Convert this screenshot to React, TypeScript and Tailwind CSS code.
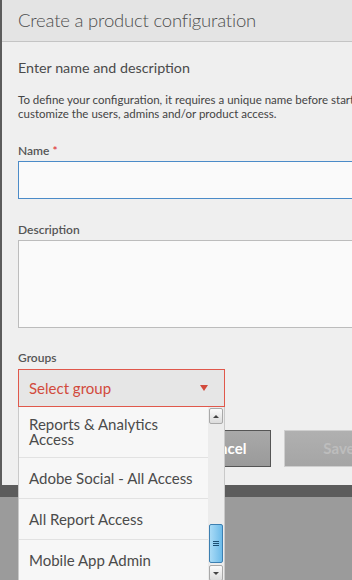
import React from "react";

const groups = [
  "Reports & Analytics Access",
  "Adobe Social - All Access",
  "All Report Access",
  "Mobile App Admin",
];

function Scrollbar() {
  return (
    <div className="flex w-[16px] shrink-0 flex-col items-center bg-[#ececec] py-[1px]">
      <div className="flex h-[16px] w-[14px] items-center justify-center rounded-[2px] border border-[#a9a9a9] bg-gradient-to-b from-[#fbfbfb] to-[#dcdcdc]">
        <div className="h-0 w-0 border-x-[3px] border-b-[3px] border-x-transparent border-b-[#444]" />
      </div>
      <div className="flex-1" />
      <div className="flex h-[39px] w-[14px] items-center justify-center rounded-[2px] border border-[#3c7fb1] bg-gradient-to-r from-[#a9dbf6] to-[#6cbbe9]">
        <div className="flex flex-col gap-[1px]">
          <div className="h-[1px] w-[6px] bg-[#1d4f73]" />
          <div className="h-[1px] w-[6px] bg-[#1d4f73]" />
          <div className="h-[1px] w-[6px] bg-[#1d4f73]" />
        </div>
      </div>
      <div className="mt-[2px] flex h-[16px] w-[14px] items-center justify-center rounded-[2px] border border-[#a9a9a9] bg-gradient-to-b from-[#fbfbfb] to-[#dcdcdc]">
        <div className="h-0 w-0 border-x-[3px] border-t-[3px] border-x-transparent border-t-[#444]" />
      </div>
    </div>
  );
}

export default function App() {
  return (
    <div
      className="relative h-[580px] w-[352px] overflow-hidden bg-[#9b9b9b]"
      style={{ fontFamily: "Lato, 'Noto Sans', sans-serif" }}
    >
      <div className="flex h-[497px] flex-col bg-[#5c5c5c]">
        <div className="ml-[2px] flex h-[485px] w-[440px] flex-col bg-[#efefef]">
          <div className="flex h-[42px] items-center border-b border-[#c4c4c4] bg-[#e4e4e4] px-[16px]">
            <h1 className="text-[18.5px] font-light tracking-[-0.2px] text-[#4e4e4e]">
              Create a product configuration
            </h1>
          </div>
          <div className="flex flex-col px-[16px] pt-[16px]">
            <h2 className="text-[14.3px] leading-[20px] text-[#4b4b4b]">
              Enter name and description
            </h2>
            <p className="mt-[15px] text-[11.5px] leading-[14px] text-[#444]">
              To define your configuration, it requires a unique name before starting to
              <br />
              customize the users, admins and/or product access.
            </p>
            <label className="mt-[22px] text-[12px] font-semibold leading-[16px] text-[#555]">
              Name <span className="text-[#e03a3a]">*</span>
            </label>
            <div className="mt-[2px] h-[38px] border border-[#4b8bc8] bg-[#fafafa]" />
            <label className="mt-[23px] text-[12px] font-semibold leading-[16px] text-[#555]">
              Description
            </label>
            <div className="mt-[2px] h-[88px] border border-[#bcbcbc] bg-[#fafafa]" />
            <label className="mt-[22px] text-[12px] font-semibold leading-[16px] text-[#555]">
              Groups
            </label>
            <div className="mt-[3px] flex h-[38px] w-[207px] items-center justify-between border border-[#e0584b] bg-[#e6e6e6] pl-[10px] pr-[16px]">
              <span className="text-[15px] text-[#d24a3c]">Select group</span>
              <div className="h-0 w-0 border-x-[4px] border-t-[6px] border-x-transparent border-t-[#d24a3c]" />
            </div>
            <div className="mt-[23px] flex gap-[13px] pl-[163px]">
              <button className="h-[37px] w-[90px] border border-[#555] bg-gradient-to-b from-[#a9a9a9] to-[#9a9a9a] pr-[4px] text-[15px] font-bold text-white">
                Cancel
              </button>
              <button className="h-[37px] w-[110px] border border-[#cfcfcf] bg-gradient-to-b from-[#b0b0b0] to-[#a5a5a5] text-[15px] font-bold text-[#bdbdbd]">
                Save
              </button>
            </div>
          </div>
        </div>
      </div>

      <div className="absolute left-[18px] top-[407px] flex h-[175px] w-[207px] border-l border-r border-[#c9c9c9] bg-[#f7f7f7]">
        <ul className="flex-1">
          {groups.map((g, i) => (
            <li
              key={g}
              className={`flex items-center border-b border-[#e2e2e2] pl-[10px] pr-[8px] text-[15px] leading-[15px] text-[#4b4b4b] ${
                i === 0 ? "h-[51px]" : "h-[41px]"
              }`}
            >
              {g}
            </li>
          ))}
        </ul>
        <Scrollbar />
      </div>
    </div>
  );
}
